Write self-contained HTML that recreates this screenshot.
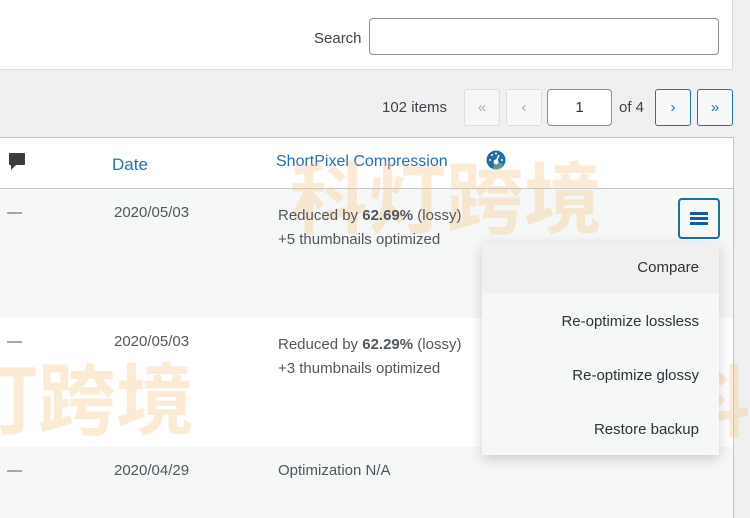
<!DOCTYPE html>
<html><head><meta charset="utf-8"><style>
*{margin:0;padding:0;box-sizing:border-box}
html,body{width:750px;height:518px;overflow:hidden}
body{background:#f0f0f1;font-family:"Liberation Sans",sans-serif;color:#50575e;position:relative;font-size:15px}
.abs{position:absolute}
.top{left:0;top:0;width:733px;height:70px;background:#fff;border:1px solid #dcdcde;border-left:none;border-top:none}
.search{left:369px;top:18px;width:350px;height:37px;border:1px solid #8c8f94;border-radius:4px;background:#fff}
.btn{top:89px;height:37px;border-radius:3px;display:flex;align-items:center;justify-content:center;font-size:15px}
.dis{background:#f6f7f7;border:1px solid #dcdcde;color:#a7aaad}
.act{background:#f6f7f7;border:1px solid #2271b1;color:#2271b1}
.table{left:0;top:137px;width:734px;height:400px;background:#fff;border:1px solid #c3c4c7;border-left:none;border-bottom:none}
.row{left:0;width:733px}
.menu{left:482px;top:242px;width:237px;height:213px;background:#f6f7f7;box-shadow:0 4px 12px rgba(0,0,0,.18)}
.mi{position:absolute;right:20px;color:#2c3338;font-size:15px}
.wm{color:#f5c88a;opacity:.35;font-family:"Noto Sans CJK SC",sans-serif;font-weight:bold;font-size:78px;white-space:nowrap;line-height:1}
</style></head><body>
<div class="abs top"></div>
<div class="abs" style="left:314px;top:30px;color:#3c434a">Search</div>
<div class="abs search"></div>
<div class="abs" style="left:382px;top:99px;color:#3c434a">102 items</div>
<div class="abs btn dis" style="left:464px;width:36px">«</div>
<div class="abs btn dis" style="left:506px;width:36px">‹</div>
<div class="abs btn" style="left:547px;width:65px;background:#fff;border:1px solid #8c8f94;border-radius:4px;color:#2c3338">1</div>
<div class="abs" style="left:619px;top:99px;color:#3c434a">of 4</div>
<div class="abs btn act" style="left:655px;width:36px">›</div>
<div class="abs btn act" style="left:697px;width:36px">»</div>
<div class="abs table"></div>
<div class="abs row" style="top:188px;height:1px;background:#c3c4c7"></div>
<div class="abs row" style="top:189px;height:129px;background:#f6f7f7"></div>
<div class="abs row" style="top:447px;height:71px;background:#f6f7f7"></div>
<svg class="abs" style="left:8px;top:152px" width="18" height="22" viewBox="0 0 18 22"><path d="M2 1h14a1 1 0 0 1 1 1v10a1 1 0 0 1-1 1H8l-5 5v-5H2a1 1 0 0 1-1-1V2a1 1 0 0 1 1-1z" fill="#3c3c3c"/></svg>
<div class="abs" style="left:112px;top:155px;color:#2271b1;font-size:17px">Date</div>
<div class="abs" style="left:276px;top:153px;color:#2271b1;font-size:16px">ShortPixel Compression</div>
<svg class="abs" style="left:485px;top:150px" width="22" height="20" viewBox="0 0 22 20"><circle cx="11" cy="10" r="9.5" fill="#1d6fa5"/><circle cx="11" cy="12" r="2.5" fill="#fff"/><path d="M11 12l3-7" stroke="#fff" stroke-width="1.6"/><circle cx="5" cy="10" r="1" fill="#fff"/><circle cx="7" cy="5" r="1" fill="#fff"/><circle cx="11" cy="3.5" r="1" fill="#fff"/><circle cx="17" cy="10" r="1" fill="#fff"/></svg>
<div class="abs wm" style="left:290px;top:155px">科灯跨境</div>
<div class="abs wm" style="left:-40px;top:356px">灯跨境</div>
<div class="abs wm" style="left:672px;top:358px">科</div>
<div class="abs" style="left:7px;top:204px">—</div>
<div class="abs" style="left:114px;top:204px">2020/05/03</div>
<div class="abs" style="left:278px;top:204px;line-height:24px">Reduced by <b>62.69%</b> (lossy)<br>+5 thumbnails optimized</div>
<div class="abs" style="left:678px;top:198px;width:42px;height:41px;border:2px solid #1d6fa5;border-radius:4px;background:#f6f7f7"></div>
<div class="abs" style="left:690px;top:212px;width:18px;height:3px;background:#135e96;box-shadow:0 5px 0 #135e96,0 10px 0 #135e96"></div>
<div class="abs" style="left:7px;top:333px">—</div>
<div class="abs" style="left:114px;top:333px">2020/05/03</div>
<div class="abs" style="left:278px;top:333px;line-height:24px">Reduced by <b>62.29%</b> (lossy)<br>+3 thumbnails optimized</div>
<div class="abs" style="left:7px;top:462px">—</div>
<div class="abs" style="left:114px;top:462px">2020/04/29</div>
<div class="abs" style="left:278px;top:462px">Optimization N/A</div>
<div class="abs menu">
<div style="position:absolute;left:0;top:0;width:237px;height:51px;background:#f0f0f1"></div>
<div class="mi" style="top:17px">Compare</div>
<div class="mi" style="top:71px">Re-optimize lossless</div>
<div class="mi" style="top:125px">Re-optimize glossy</div>
<div class="mi" style="top:179px">Restore backup</div>
</div>
</body></html>
